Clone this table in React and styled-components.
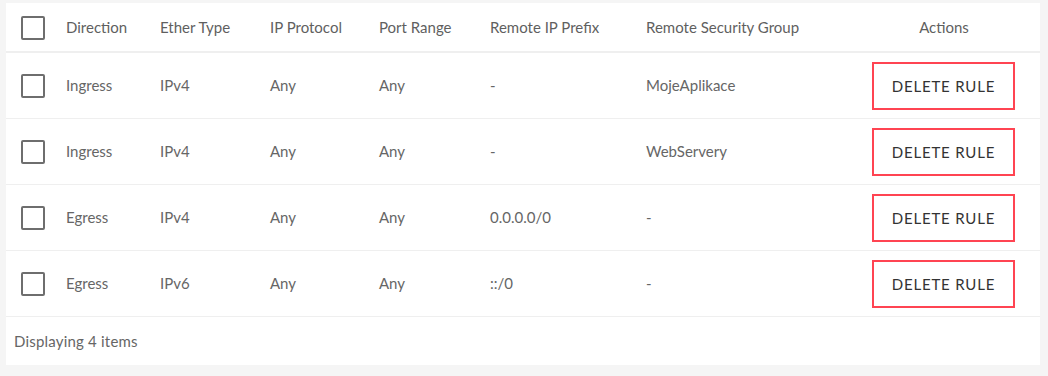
import React from "react";
import styled, { createGlobalStyle } from "styled-components";

const GlobalStyle = createGlobalStyle`
  html, body {
    margin: 0;
    padding: 0;
    background: #f5f5f5;
  }
  body {
    font-family: Lato, "Liberation Sans", sans-serif;
  }
`;

const Page = styled.div`
  padding: 3px 8px 11px 6px;
`;

const Panel = styled.div`
  background: #ffffff;
  width: 1034px;
`;

const COLS = "60px 94px 110px 109px 111px 156px 202px 192px";

const HeaderRow = styled.div`
  display: grid;
  grid-template-columns: ${COLS};
  height: 48px;
  align-items: center;
  border-bottom: 2px solid #efefef;
`;

const Row = styled.div`
  display: grid;
  grid-template-columns: ${COLS};
  height: 65px;
  align-items: center;
  border-bottom: 1px solid #efefef;
`;

const Cell = styled.div`
  font-size: 15px;
  color: ${(p) => (p.$head ? "#5f5f5f" : "#666666")};
  white-space: nowrap;
  text-align: ${(p) => (p.$center ? "center" : "left")};
  display: ${(p) => (p.$center ? "flex" : "block")};
  justify-content: center;
  margin-top: ${(p) => (p.$head ? "0" : "-1px")};
`;

const CheckCell = styled.div`
  padding-left: 15px;
  display: flex;
  align-items: center;
  padding-top: ${(p) => (p.$head ? "2px" : "1px")};
`;

const Check = styled.span`
  display: block;
  box-sizing: border-box;
  width: 24px;
  height: 24px;
  border: 2px solid #6e6e6e;
  border-radius: 2px;
`;

const DeleteButton = styled.button`
  box-sizing: border-box;
  width: 143px;
  height: 48px;
  margin-left: -1px;
  margin-top: 1px;
  background: #ffffff;
  border: 2px solid #ff4452;
  font-family: Lato, "Liberation Sans", sans-serif;
  font-size: 15px;
  letter-spacing: 0.8px;
  color: #333333;
  cursor: pointer;
  padding: 0;
`;

const Footer = styled.div`
  height: 48px;
  display: flex;
  align-items: center;
  padding-left: 8px;
  font-size: 15px;
  letter-spacing: 0.2px;
  color: #666666;
`;

const headers = [
  "Direction",
  "Ether Type",
  "IP Protocol",
  "Port Range",
  "Remote IP Prefix",
  "Remote Security Group",
];

const rules = [
  ["Ingress", "IPv4", "Any", "Any", "-", "MojeAplikace"],
  ["Ingress", "IPv4", "Any", "Any", "-", "WebServery"],
  ["Egress", "IPv4", "Any", "Any", "0.0.0.0/0", "-"],
  ["Egress", "IPv6", "Any", "Any", "::/0", "-"],
];

export default function App() {
  return (
    <Page>
      <GlobalStyle />
      <Panel>
        <HeaderRow>
          <CheckCell $head>
            <Check />
          </CheckCell>
          {headers.map((h) => (
            <Cell $head key={h}>
              {h}
            </Cell>
          ))}
          <Cell $head $center>
            Actions
          </Cell>
        </HeaderRow>
        {rules.map((r, i) => (
          <Row key={i}>
            <CheckCell>
              <Check />
            </CheckCell>
            {r.map((v, j) => (
              <Cell key={j}>{v}</Cell>
            ))}
            <Cell $center>
              <DeleteButton>DELETE RULE</DeleteButton>
            </Cell>
          </Row>
        ))}
        <Footer>Displaying 4 items</Footer>
      </Panel>
    </Page>
  );
}
